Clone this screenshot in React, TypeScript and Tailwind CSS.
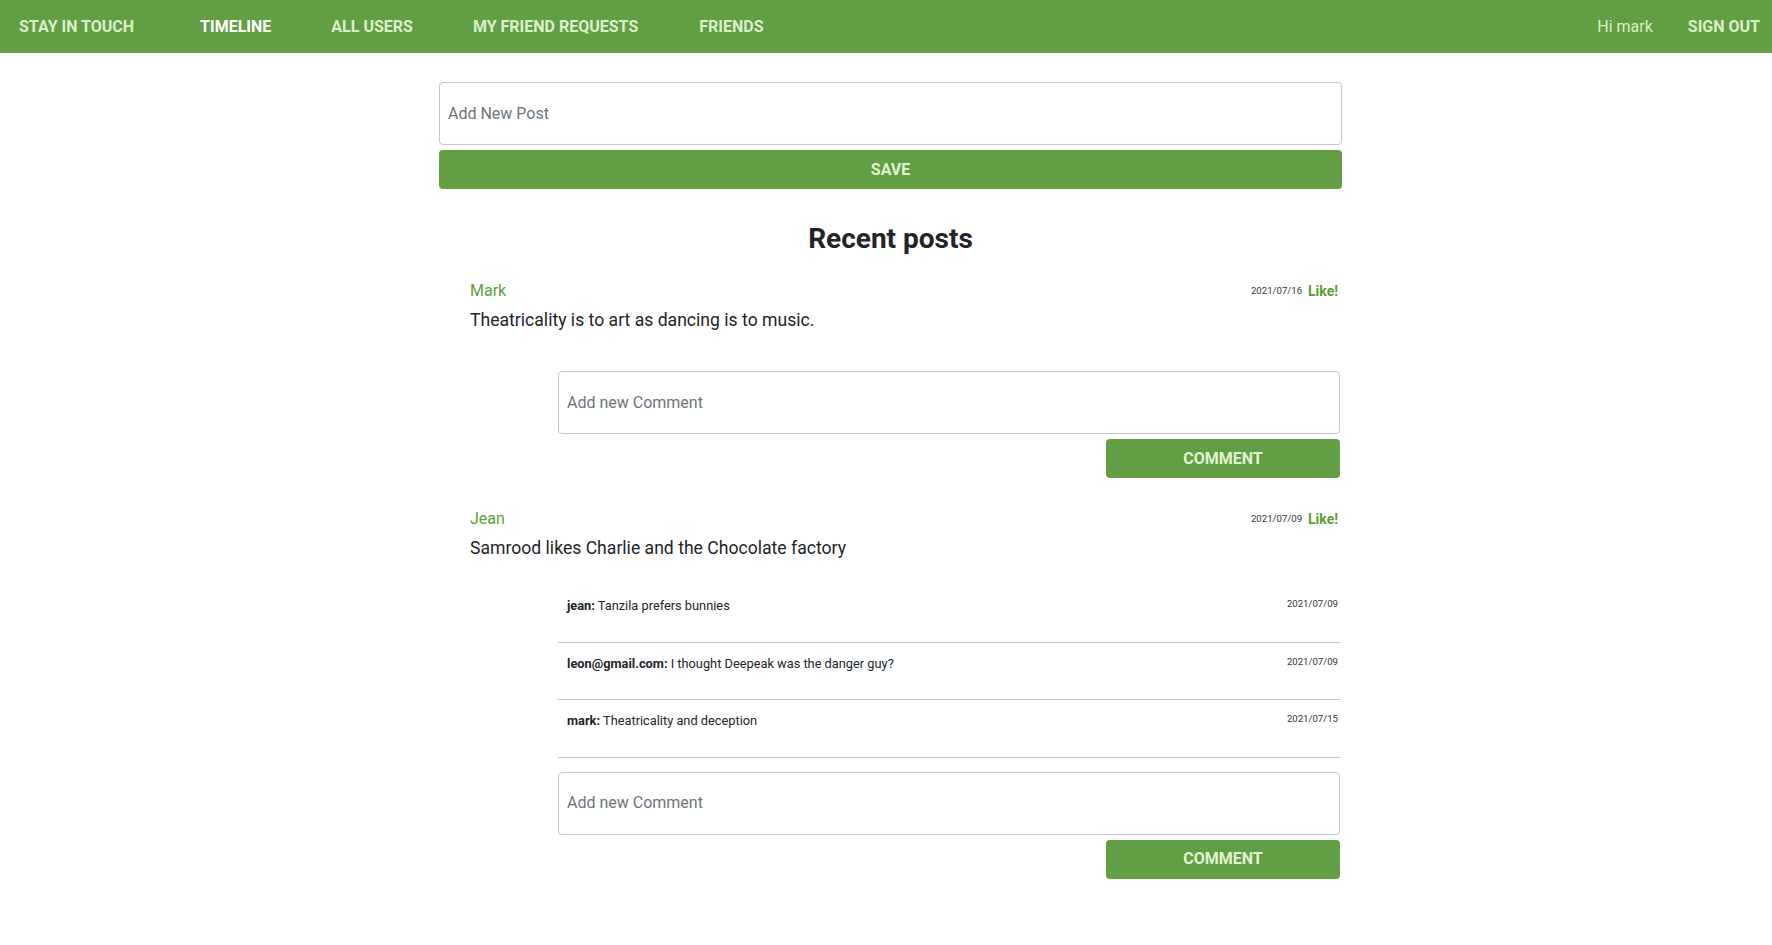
import React from "react";

const green = "bg-[#629e43]";

function CommentBox() {
  return (
    <div className="flex flex-col items-end">
      <div className="w-full h-[63px] border border-[#c6c6c6] rounded-[4px] flex items-center pl-[8px] text-[16px] text-[#6c757d]">
        Add new Comment
      </div>
      <button className="mt-[5px] w-[234px] h-[39px] rounded-[4px] bg-[#629e43] text-[#e2f3cf] font-bold text-[16px] uppercase">
        Comment
      </button>
    </div>
  );
}

type C = { user: string; text: string; date: string };

function Post({ user, date, text, comments }: { user: string; date: string; text: string; comments: C[] }) {
  return (
    <div className="pl-[31px] pr-[4px]">
      <div className="flex items-center justify-between h-[24px]">
        <span className="text-[16px] text-[#5ea040]">{user}</span>
        <span className="flex items-center gap-[6px]">
          <span className="text-[9.6px] text-[#333]">{date}</span>
          <span className="text-[14px] font-bold text-[#5a9e34]">Like!</span>
        </span>
      </div>
      <div className="mt-[4px] text-[17.6px] leading-[27px] text-[#212529]">{text}</div>
      <div className="ml-[88px] mr-[-2px] mt-[23px] flex flex-col">
        {comments.map((c, i) => (
          <div key={i} className="h-[57.6px] border-b border-[#c4c4c4] flex justify-between items-start pt-[13px] pl-[9px] pr-[2px]">
            <span className="text-[12.8px] leading-[16px] text-[#212529]">
              <b className="font-bold">{c.user}:</b> {c.text}
            </span>
            <span className="text-[9.6px] leading-[12px] text-[#333]">{c.date}</span>
          </div>
        ))}
        <div className="pt-[14px]">
          <CommentBox />
        </div>
      </div>
    </div>
  );
}

export default function App() {
  return (
    <div className="min-h-screen bg-white" style={{ fontFamily: "Roboto, 'Noto Sans', sans-serif" }}>
      <nav className={`${green} h-[53px] flex items-center justify-between`}>
        <div className="flex items-center text-[16px] font-bold uppercase text-[#dcefc9]">
          <span className="pl-[19px] pr-[66px]">Stay in touch</span>
          <span className="pr-[60px] text-white">Timeline</span>
          <span className="pr-[60px]">All users</span>
          <span className="pr-[61px]">My friend requests</span>
          <span>Friends</span>
        </div>
        <div className="flex items-center text-[16px] text-[#dcefc9] pr-[12px]">
          <span className="pr-[35px]">Hi mark</span>
          <span className="font-bold uppercase">Sign out</span>
        </div>
      </nav>
      <main className="w-[912px] mx-auto pl-[9px] pb-[40px]">
        <div className="mt-[29px] h-[63px] border border-[#c6c6c6] rounded-[4px] flex items-center pl-[8px] text-[16px] text-[#6c757d]">
          Add New Post
        </div>
        <button className="mt-[5px] w-full h-[39px] rounded-[4px] bg-[#629e43] text-[#e2f3cf] font-bold text-[16px] uppercase">
          Save
        </button>
        <h2 className="mt-[33px] text-center text-[28px] leading-[33px] font-bold text-[#212529]">Recent posts</h2>
        <div className="mt-[24px]">
          <Post
            user="Mark"
            date="2021/07/16"
            text="Theatricality is to art as dancing is to music."
            comments={[]}
          />
        </div>
        <div className="mt-[29px]">
          <Post
            user="Jean"
            date="2021/07/09"
            text="Samrood likes Charlie and the Chocolate factory"
            comments={[
              { user: "jean", text: "Tanzila prefers bunnies", date: "2021/07/09" },
              { user: "leon@gmail.com", text: "I thought Deepeak was the danger guy?", date: "2021/07/09" },
              { user: "mark", text: "Theatricality and deception", date: "2021/07/15" },
            ]}
          />
        </div>
      </main>
    </div>
  );
}
